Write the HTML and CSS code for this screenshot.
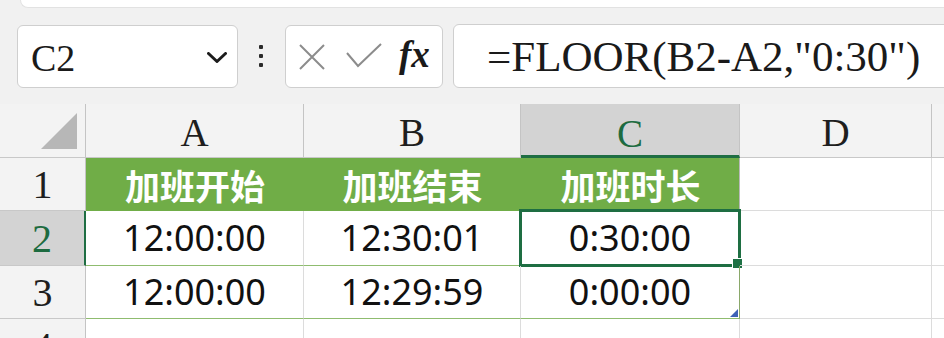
FILE: index.html
```html
<!DOCTYPE html>
<html lang="zh-CN">
<head>
<meta charset="utf-8">
<title>Sheet</title>
<link rel="stylesheet" href="styles.css">
</head>
<body>
<div class="topbar"></div>
<div class="toolbar">
  <div class="namebox">
    <span class="ref">C2</span>
    <svg class="chev" width="20" height="11" viewBox="0 0 20 11"><path d="M1.5 1.5 L10 9.5 L18.5 1.5" fill="none" stroke="#1c1c1c" stroke-width="3" stroke-linecap="round" stroke-linejoin="round"/></svg>
  </div>
  <div class="dots"><i></i><i></i><i></i></div>
  <div class="fbtns">
    <svg class="ico-x" width="26" height="26" viewBox="0 0 26 26"><path d="M1 1 L25 25 M25 1 L1 25" stroke="#8c8c8c" stroke-width="2" fill="none"/></svg>
    <svg class="ico-ok" width="36" height="25" viewBox="0 0 36 25"><path d="M1 10 L12 23 L35 1" stroke="#8c8c8c" stroke-width="2" fill="none"/></svg>
    <span class="fx">fx</span>
  </div>
  <div class="finput">=FLOOR(B2-A2,"0:30")</div>
</div>
<div class="sheet">
  <div class="c hd corner"><span class="tri"></span></div>
  <div class="c hd col">A</div>
  <div class="c hd col">B</div>
  <div class="c hd col sel">C</div>
  <div class="c hd col">D</div>
  <div class="c hd col last"></div>

  <div class="c hd row">1</div>
  <div class="c th">加班开始</div>
  <div class="c th">加班结束</div>
  <div class="c th">加班时长</div>
  <div class="c"></div>
  <div class="c last"></div>

  <div class="c hd row rsel">2</div>
  <div class="c td">12:00:00</div>
  <div class="c td">12:30:01</div>
  <div class="c td tc">0:30:00<span class="selbox"><span class="handle"></span></span></div>
  <div class="c"></div>
  <div class="c last"></div>

  <div class="c hd row">3</div>
  <div class="c td">12:00:00</div>
  <div class="c td">12:29:59</div>
  <div class="c td tc">0:00:00<span class="resize"></span></div>
  <div class="c"></div>
  <div class="c last"></div>

  <div class="c hd row">4</div>
  <div class="c"></div>
  <div class="c"></div>
  <div class="c"></div>
  <div class="c"></div>
  <div class="c last"></div>
</div>
</body>
</html>
```

FILE: styles.css
```css
html, body {
  margin: 0;
  padding: 0;
  width: 944px;
  height: 338px;
  overflow: hidden;
  background: #f1f1f1;
}

.topbar {
  height: 7px;
  margin-left: 20px;
  background: #ffffff;
  border-bottom: 1px solid #e2e2e2;
  border-left: 1px solid #e2e2e2;
  border-bottom-left-radius: 12px;
}

.toolbar {
  display: flex;
  align-items: flex-start;
  padding-top: 16px;
  padding-left: 17px;
  height: 64px;
}

.namebox {
  box-sizing: border-box;
  width: 221px;
  height: 63px;
  margin-top: 1px;
  background: #fff;
  border: 1px solid #cfcfcf;
  border-radius: 6px;
  display: flex;
  align-items: center;
  justify-content: space-between;
  padding: 0 10px 0 13px;
}

.ref {
  font-family: "Liberation Serif", serif;
  font-size: 38px;
  color: #1a1a1a;
  line-height: 1;
  padding-top: 2px;
}

.chev { display: block; margin-top: 2px; }

.dots {
  width: 4px;
  margin-left: 21px;
  margin-top: 21px;
  display: flex;
  flex-direction: column;
  gap: 5px;
}
.dots i {
  display: block;
  width: 4px;
  height: 4px;
  background: #2a2a2a;
  border-radius: 1px;
}

.fbtns {
  box-sizing: border-box;
  width: 158px;
  height: 63px;
  margin-left: 22px;
  margin-top: 1px;
  background: #fff;
  border: 1px solid #cfcfcf;
  border-radius: 6px;
  display: flex;
  align-items: center;
  padding-left: 13px;
}
.ico-x { display: block; }
.ico-ok { display: block; margin-left: 21px; margin-top: -2px; }
.fx {
  margin-left: 17px;
  font-family: "Liberation Serif", serif;
  font-style: italic;
  font-weight: bold;
  font-size: 37px;
  color: #1a1a1a;
  line-height: 1;
  margin-top: -4px;
}

.finput {
  box-sizing: border-box;
  flex: 1;
  height: 64px;
  margin-left: 10px;
  margin-right: -20px;
  background: #fff;
  border: 1px solid #cfcfcf;
  border-radius: 6px 0 0 6px;
  display: flex;
  align-items: center;
  padding-left: 33px;
  font-family: "Liberation Serif", serif;
  font-size: 43px;
  color: #1a1a1a;
  white-space: nowrap;
  line-height: 1;
}

.sheet {
  margin-top: 16px;
  display: grid;
  grid-template-columns: 86px 218px 217px 219px 192px 1fr;
  grid-template-rows: 54px 53px 55px 53px 54px;
  background: #fff;
}

.c {
  box-sizing: border-box;
  position: relative;
  border-right: 1px solid #dcdcdc;
  border-bottom: 1px solid #dcdcdc;
  display: flex;
  align-items: center;
  justify-content: center;
  white-space: nowrap;
}
.c.last { border-right: none; }

.hd {
  background: #f3f3f3;
  border-right-color: #c4c4c4;
  border-bottom-color: #c8c8c8;
  font-family: "Liberation Serif", serif;
  font-size: 39px;
  color: #1e1e1e;
  line-height: 1;
}
.hd.col { padding-top: 4px; }
.hd.row { padding-top: 2px; font-size: 40px; }

.corner { position: relative; }
.tri {
  position: absolute;
  left: 41px;
  top: 9px;
  width: 36px;
  height: 36px;
  background: #b7b7b7;
  clip-path: polygon(100% 0, 100% 100%, 0 100%);
}

.hd.sel {
  background: #d3d3d3;
  color: #1d6b40;
  border-bottom: 3px solid #1f6e43;
  padding-top: 7px;
}
.hd.rsel {
  background: #d3d3d3;
  color: #1d6b40;
  border-right: 2px solid #1f6e43;
}

.th {
  background: #70ad47;
  border-right-color: #70ad47;
  border-bottom-color: #70ad47;
  font-family: "Noto Sans CJK SC", sans-serif;
  font-weight: bold;
  font-size: 35px;
  color: #fff;
  line-height: 1;
  padding-left: 1px;
}
.th + .th + .th { border-right-color: #b9b9b9; }

.td {
  font-family: "Noto Sans", sans-serif;
  font-size: 36px;
  color: #111;
  line-height: 1;
  border-bottom-color: #8fbc6f;
}
.td.tc { border-right-color: #8aa86a; }

.selbox {
  position: absolute;
  left: -2px;
  right: -2px;
  top: -2px;
  bottom: -2px;
  border: 3px solid #1e6e42;
}
.handle {
  position: absolute;
  right: -5px;
  bottom: -5px;
  width: 11px;
  height: 11px;
  box-sizing: border-box;
  border: 1px solid #fff;
  background: #1e7145;
}

.resize {
  position: absolute;
  right: 1px;
  bottom: 1px;
  width: 8px;
  height: 8px;
  background: #3e62b6;
  clip-path: polygon(100% 0, 100% 100%, 0 100%);
}
```
